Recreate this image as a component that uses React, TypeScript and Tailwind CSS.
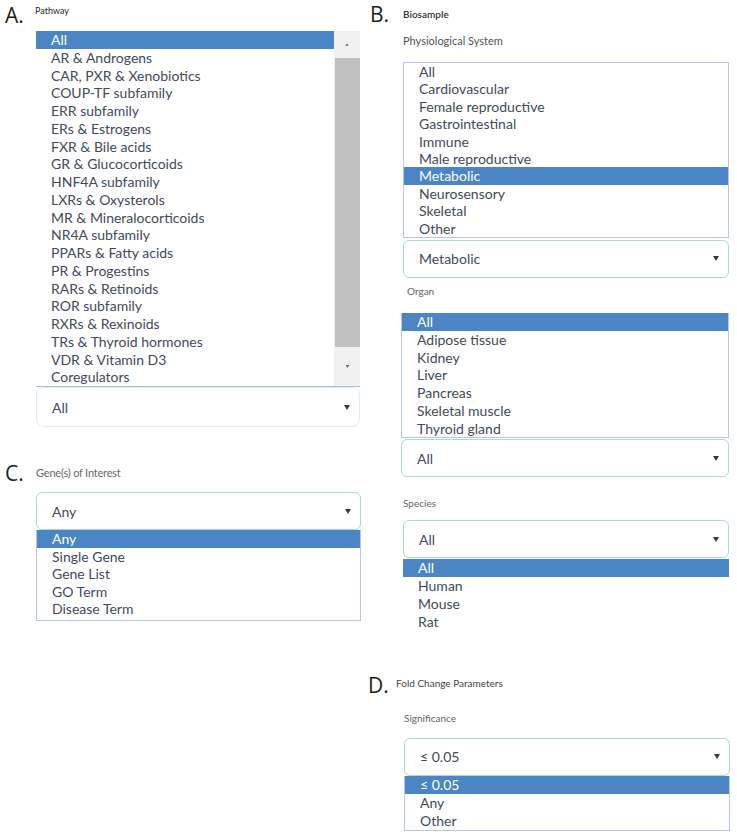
import React from "react";

const F = { fontFamily: "Lato, 'Open Sans', 'Liberation Sans', sans-serif" };

function Tri({ size = 6 }: { size?: number }) {
  return (
    <svg width={size} height={size - 1} viewBox="0 0 6 5">
      <path d="M0 0 L6 0 L3 5 Z" fill="#3a3a3a" />
    </svg>
  );
}

function Select({ value, cls = "" }: { value: string; cls?: string }) {
  return (
    <div
      className={
        "flex items-center justify-between h-[38px] border border-[#a9dccd] rounded-[6px] bg-white pl-[15px] pr-[9px] text-[14px] text-[#434b5a] " +
        cls
      }
    >
      <span>{value}</span>
      <Tri />
    </div>
  );
}

function Items({
  items,
  selected,
  rowClass,
}: {
  items: string[];
  selected: string;
  rowClass: string;
}) {
  return (
    <div className="flex flex-col">
      {items.map((it) => (
        <div
          key={it}
          className={
            it === selected
              ? "bg-[#4a85c5] text-white pl-[15px] text-[14px] whitespace-nowrap " + rowClass
              : "text-[#434b5a] pl-[15px] text-[14px] whitespace-nowrap " + rowClass
          }
        >
          {it}
        </div>
      ))}
    </div>
  );
}

const pathways = [
  "All",
  "AR & Androgens",
  "CAR, PXR & Xenobiotics",
  "COUP-TF subfamily",
  "ERR subfamily",
  "ERs & Estrogens",
  "FXR & Bile acids",
  "GR & Glucocorticoids",
  "HNF4A subfamily",
  "LXRs & Oxysterols",
  "MR & Mineralocorticoids",
  "NR4A subfamily",
  "PPARs & Fatty acids",
  "PR & Progestins",
  "RARs & Retinoids",
  "ROR subfamily",
  "RXRs & Rexinoids",
  "TRs & Thyroid hormones",
  "VDR & Vitamin D3",
  "Coregulators",
];

const systems = [
  "All",
  "Cardiovascular",
  "Female reproductive",
  "Gastrointestinal",
  "Immune",
  "Male reproductive",
  "Metabolic",
  "Neurosensory",
  "Skeletal",
  "Other",
];

const organs = ["All", "Adipose tissue", "Kidney", "Liver", "Pancreas", "Skeletal muscle", "Thyroid gland"];
const genes = ["Any", "Single Gene", "Gene List", "GO Term", "Disease Term"];
const species = ["All", "Human", "Mouse", "Rat"];
const sig = ["≤ 0.05", "Any", "Other"];

function Letter({ children }: { children: React.ReactNode }) {
  return (
    <div
      className="text-[21px] leading-[24px] text-[#1e1e1e]"
      style={{ fontFamily: "'Open Sans', 'Liberation Sans', sans-serif" }}
    >
      {children}
    </div>
  );
}

export default function App() {
  return (
    <div className="w-[737px] h-[837px] bg-white flex overflow-hidden" style={F}>
      {/* LEFT COLUMN */}
      <div className="w-[365px] shrink-0 flex flex-col">
        {/* A */}
        <div className="flex pt-[3px]">
          <div className="w-[36px] pl-[5px] shrink-0">
            <Letter>A.</Letter>
          </div>
          <div className="flex flex-col w-[324px]">
            <div className="text-[9px] leading-[10px] text-[#2a2a2a] mt-[3px] -ml-[1px]">Pathway</div>
            <div className="mt-[15px] flex border-b border-[#a7badf]">
              <div className="flex-1 pt-0">
                <Items items={pathways} selected="All" rowClass="h-[17.75px] leading-[17.75px]" />
              </div>
              <div className="w-[26px] bg-[#f1f1f1] flex flex-col items-center">
                <div className="h-[27px] flex items-center justify-center">
                  <svg width="4" height="3" viewBox="0 0 6 5">
                    <path d="M3 0 L6 5 L0 5 Z" fill="#888" />
                  </svg>
                </div>
                <div className="h-[289px] w-[25px] ml-[1px] bg-[#c1c1c1]" />
                <div className="flex-1 flex items-center justify-center">
                  <svg width="5" height="3" viewBox="0 0 6 5">
                    <path d="M0 0 L6 0 L3 5 Z" fill="#666" />
                  </svg>
                </div>
              </div>
            </div>
            <Select value="All" cls="h-[40px] border-[#dbeee9] rounded-[8px]" />
          </div>
        </div>

        {/* C */}
        <div className="flex mt-[34px]">
          <div className="w-[36px] pl-[5px] shrink-0">
            <Letter>C.</Letter>
          </div>
          <div className="flex flex-col w-[325px]">
            <div className="text-[11px] leading-[12px] text-[#6a6a6a] mt-[6px] tracking-[-0.2px]">Gene(s) of Interest</div>
            <Select value="Any" cls="mt-[13px]" />
            <div className="border border-t-0 border-[#b9c6e3] pb-[2px]">
              <Items items={genes} selected="Any" rowClass="h-[17.6px] leading-[17.6px]" />
            </div>
          </div>
        </div>
      </div>

      {/* RIGHT COLUMN */}
      <div className="flex-1 flex flex-col">
        {/* B */}
        <div className="flex pt-[2px]">
          <div className="w-[38px] pl-[5px] shrink-0">
            <Letter>B.</Letter>
          </div>
          <div className="flex flex-col w-[326px]">
            <div className="text-[10px] leading-[11px] text-[#333] font-semibold mt-[7px]">Biosample</div>
            <div className="text-[11px] leading-[12px] text-[#555] mt-[15px]">Physiological System</div>
            <div className="mt-[15px] border border-[#b9c6e3]">
              <Items items={systems} selected="Metabolic" rowClass="h-[17.4px] leading-[17.4px]" />
            </div>
            <Select value="Metabolic" cls="mt-[2px] h-[37px]" />

            <div className="text-[10px] leading-[11px] text-[#666] mt-[8px] ml-[4px]">Organ</div>
            <div className="mt-[16px] -ml-[2px] border border-t-0 border-[#b9c6e3]">
              <Items items={organs} selected="All" rowClass="h-[17.8px] leading-[17.8px]" />
            </div>
            <Select value="All" cls="-ml-[2px] mt-[1px]" />

            <div className="text-[10px] leading-[11px] text-[#666] mt-[21px]">Species</div>
            <Select value="All" cls="mt-[11px]" />
            <div className="mt-[1px]">
              <Items items={species} selected="All" rowClass="h-[17.8px] leading-[17.8px]" />
            </div>
          </div>
        </div>

        {/* D */}
        <div className="flex mt-[42px]">
          <div className="w-[31px] pl-[3px] shrink-0">
            <Letter>D.</Letter>
          </div>
          <div className="flex flex-col">
            <div className="text-[10px] leading-[11px] text-[#444] mt-[5px]">Fold Change Parameters</div>
            <div className="ml-[8px] w-[326px] flex flex-col">
              <div className="text-[10px] leading-[11px] text-[#666] mt-[24px]">Significance</div>
              <Select value="≤ 0.05" cls="mt-[14px] border-[#9fdcc8]" />
              <div className="border border-t-0 border-[#b9c6e3]">
                <Items items={sig} selected="≤ 0.05" rowClass="h-[18px] leading-[18px]" />
              </div>
            </div>
          </div>
        </div>
      </div>
    </div>
  );
}
